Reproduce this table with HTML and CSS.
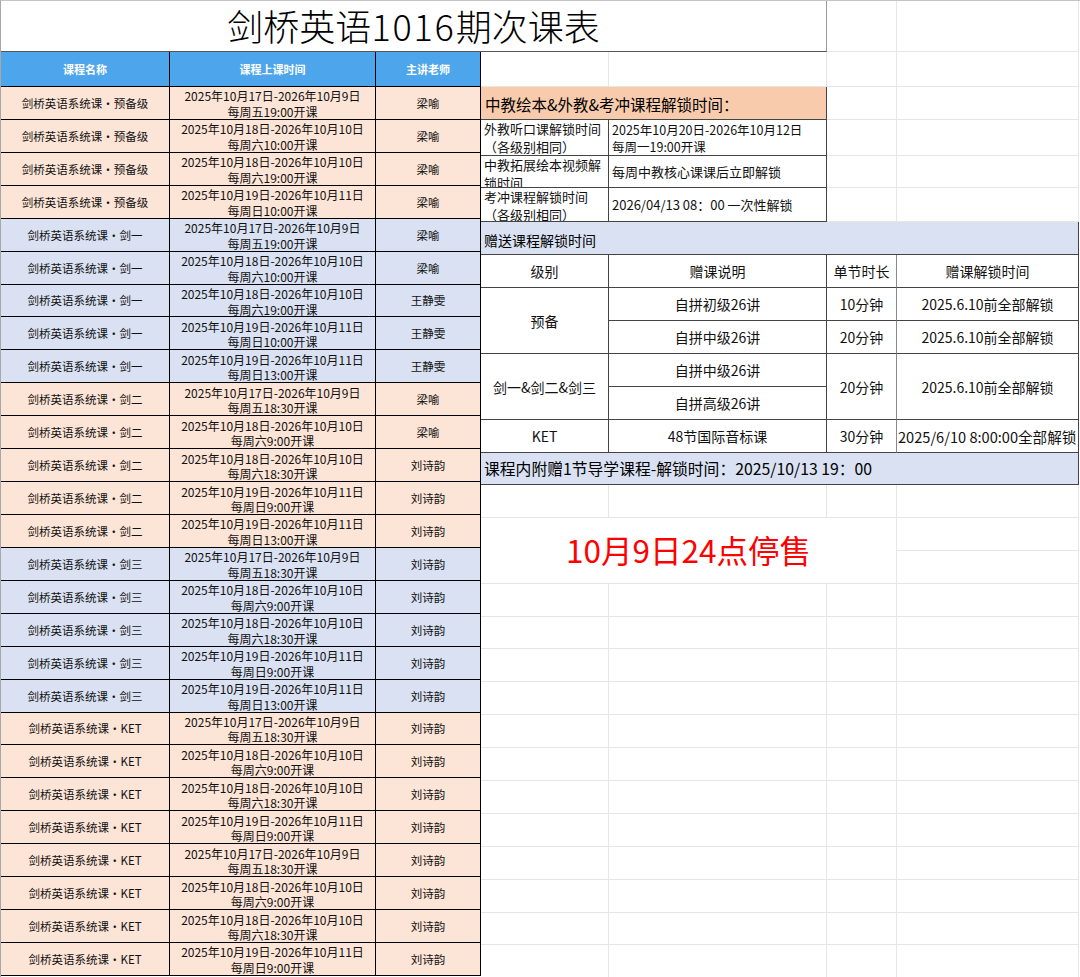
FILE: index.html
```html
<!DOCTYPE html>
<html lang="zh-CN">
<head>
<meta charset="utf-8">
<title>剑桥英语1016期次课表</title>
<link rel="stylesheet" href="styles.css">
</head>
<body>
<div class="sheet">
  <div class="top">
    <div class="title">剑桥英语<span class="num">1016</span>期次课表</div>
    <div class="e wf"></div>
    <div class="e wg"></div>
  </div>
  <div class="body">
    <div class="left">
      <div class="h">课程名称</div><div class="h">课程上课时间</div><div class="h">主讲老师</div>

      <div class="c pe">剑桥英语系统课・预备级</div><div class="c t pe">2025年10月17日-2026年10月9日<br>每周五19:00开课</div><div class="c pe">梁喻</div>
      <div class="c pe">剑桥英语系统课・预备级</div><div class="c t pe">2025年10月18日-2026年10月10日<br>每周六10:00开课</div><div class="c pe">梁喻</div>
      <div class="c pe">剑桥英语系统课・预备级</div><div class="c t pe">2025年10月18日-2026年10月10日<br>每周六19:00开课</div><div class="c pe">梁喻</div>
      <div class="c pe">剑桥英语系统课・预备级</div><div class="c t pe">2025年10月19日-2026年10月11日<br>每周日10:00开课</div><div class="c pe">梁喻</div>

      <div class="c bl">剑桥英语系统课・剑一</div><div class="c t bl">2025年10月17日-2026年10月9日<br>每周五19:00开课</div><div class="c bl">梁喻</div>
      <div class="c bl">剑桥英语系统课・剑一</div><div class="c t bl">2025年10月18日-2026年10月10日<br>每周六10:00开课</div><div class="c bl">梁喻</div>
      <div class="c bl">剑桥英语系统课・剑一</div><div class="c t bl">2025年10月18日-2026年10月10日<br>每周六19:00开课</div><div class="c bl">王静雯</div>
      <div class="c bl">剑桥英语系统课・剑一</div><div class="c t bl">2025年10月19日-2026年10月11日<br>每周日10:00开课</div><div class="c bl">王静雯</div>
      <div class="c bl">剑桥英语系统课・剑一</div><div class="c t bl">2025年10月19日-2026年10月11日<br>每周日13:00开课</div><div class="c bl">王静雯</div>

      <div class="c pe">剑桥英语系统课・剑二</div><div class="c t pe">2025年10月17日-2026年10月9日<br>每周五18:30开课</div><div class="c pe">梁喻</div>
      <div class="c pe">剑桥英语系统课・剑二</div><div class="c t pe">2025年10月18日-2026年10月10日<br>每周六9:00开课</div><div class="c pe">梁喻</div>
      <div class="c pe">剑桥英语系统课・剑二</div><div class="c t pe">2025年10月18日-2026年10月10日<br>每周六18:30开课</div><div class="c pe">刘诗韵</div>
      <div class="c pe">剑桥英语系统课・剑二</div><div class="c t pe">2025年10月19日-2026年10月11日<br>每周日9:00开课</div><div class="c pe">刘诗韵</div>
      <div class="c pe">剑桥英语系统课・剑二</div><div class="c t pe">2025年10月19日-2026年10月11日<br>每周日13:00开课</div><div class="c pe">刘诗韵</div>

      <div class="c bl">剑桥英语系统课・剑三</div><div class="c t bl">2025年10月17日-2026年10月9日<br>每周五18:30开课</div><div class="c bl">刘诗韵</div>
      <div class="c bl">剑桥英语系统课・剑三</div><div class="c t bl">2025年10月18日-2026年10月10日<br>每周六9:00开课</div><div class="c bl">刘诗韵</div>
      <div class="c bl">剑桥英语系统课・剑三</div><div class="c t bl">2025年10月18日-2026年10月10日<br>每周六18:30开课</div><div class="c bl">刘诗韵</div>
      <div class="c bl">剑桥英语系统课・剑三</div><div class="c t bl">2025年10月19日-2026年10月11日<br>每周日9:00开课</div><div class="c bl">刘诗韵</div>
      <div class="c bl">剑桥英语系统课・剑三</div><div class="c t bl">2025年10月19日-2026年10月11日<br>每周日13:00开课</div><div class="c bl">刘诗韵</div>

      <div class="c pe">剑桥英语系统课・KET</div><div class="c t pe">2025年10月17日-2026年10月9日<br>每周五18:30开课</div><div class="c pe">刘诗韵</div>
      <div class="c pe">剑桥英语系统课・KET</div><div class="c t pe">2025年10月18日-2026年10月10日<br>每周六9:00开课</div><div class="c pe">刘诗韵</div>
      <div class="c pe">剑桥英语系统课・KET</div><div class="c t pe">2025年10月18日-2026年10月10日<br>每周六18:30开课</div><div class="c pe">刘诗韵</div>
      <div class="c pe">剑桥英语系统课・KET</div><div class="c t pe">2025年10月19日-2026年10月11日<br>每周日9:00开课</div><div class="c pe">刘诗韵</div>
      <div class="c pe">剑桥英语系统课・KET</div><div class="c t pe">2025年10月17日-2026年10月9日<br>每周五18:30开课</div><div class="c pe">刘诗韵</div>
      <div class="c pe">剑桥英语系统课・KET</div><div class="c t pe">2025年10月18日-2026年10月10日<br>每周六9:00开课</div><div class="c pe">刘诗韵</div>
      <div class="c pe">剑桥英语系统课・KET</div><div class="c t pe">2025年10月18日-2026年10月10日<br>每周六18:30开课</div><div class="c pe">刘诗韵</div>
      <div class="c pe">剑桥英语系统课・KET</div><div class="c t pe">2025年10月19日-2026年10月11日<br>每周日9:00开课</div><div class="c pe">刘诗韵</div>
    </div>

    <div class="right">
      <!-- row 1 -->
      <div class="e"></div><div class="e"></div><div class="e"></div><div class="e"></div>
      <!-- row 2 -->
      <div class="k orange s2">中教绘本&amp;外教&amp;考冲课程解锁时间：</div><div class="e"></div><div class="e"></div>
      <!-- row 3 -->
      <div class="k lab">外教听口课解锁时间<br>（各级别相同）</div><div class="k val">2025年10月20日-2026年10月12日<br>每周一19:00开课</div><div class="e"></div><div class="e"></div>
      <!-- row 4 -->
      <div class="k lab">中教拓展绘本视频解锁时间</div><div class="k val mid">每周中教核心课课后立即解锁</div><div class="e"></div><div class="e"></div>
      <!-- row 5 -->
      <div class="k lab">考冲课程解锁时间<br>（各级别相同）</div><div class="k val mid">2026/04/13 08：00 一次性解锁</div><div class="e"></div><div class="e"></div>
      <!-- row 6 -->
      <div class="k band s4">赠送课程解锁时间</div>
      <!-- row 7 -->
      <div class="k g">级别</div><div class="k g">赠课说明</div><div class="k g f">单节时长</div><div class="k g">赠课解锁时间</div>
      <!-- rows 8-9 -->
      <div class="k g r2">预备</div><div class="k g">自拼初级26讲</div><div class="k g f">10分钟</div><div class="k g">2025.6.10前全部解锁</div>
      <div class="k g">自拼中级26讲</div><div class="k g f">20分钟</div><div class="k g">2025.6.10前全部解锁</div>
      <!-- rows 10-11 -->
      <div class="k g r2">剑一&amp;剑二&amp;剑三</div><div class="k g">自拼中级26讲</div><div class="k g f r2">20分钟</div><div class="k g r2">2025.6.10前全部解锁</div>
      <div class="k g">自拼高级26讲</div>
      <!-- row 12 -->
      <div class="k g">KET</div><div class="k g">48节国际音标课</div><div class="k g f">30分钟</div><div class="k g tight">2025/6/10 8:00:00全部解锁</div>
      <!-- row 13 -->
      <div class="k band big s4">课程内附赠1节导学课程-解锁时间：2025/10/13 19：00</div>
      <!-- row 14 -->
      <div class="e"></div><div class="e"></div><div class="e"></div><div class="e"></div>
      <!-- rows 15-16 -->
      <div class="e stop s3 r2">10月9日24点停售</div><div class="e"></div>
      <div class="e"></div>
      <!-- rows 17-28 -->
      <div class="e"></div><div class="e"></div><div class="e"></div><div class="e"></div>
      <div class="e"></div><div class="e"></div><div class="e"></div><div class="e"></div>
      <div class="e"></div><div class="e"></div><div class="e"></div><div class="e"></div>
      <div class="e"></div><div class="e"></div><div class="e"></div><div class="e"></div>
      <div class="e"></div><div class="e"></div><div class="e"></div><div class="e"></div>
      <div class="e"></div><div class="e"></div><div class="e"></div><div class="e"></div>
      <div class="e"></div><div class="e"></div><div class="e"></div><div class="e"></div>
      <div class="e"></div><div class="e"></div><div class="e"></div><div class="e"></div>
      <div class="e"></div><div class="e"></div><div class="e"></div><div class="e"></div>
      <div class="e"></div><div class="e"></div><div class="e"></div><div class="e"></div>
      <div class="e"></div><div class="e"></div><div class="e"></div><div class="e"></div>
      <div class="e"></div><div class="e"></div><div class="e"></div><div class="e"></div>
    </div>
  </div>
</div>
</body>
</html>
```

FILE: styles.css
```css
* {
  box-sizing: border-box;
  margin: 0;
  padding: 0;
}

html, body {
  background: #ffffff;
}

body {
  margin: 0;
  font-family: "Noto Sans CJK SC", "Microsoft YaHei", sans-serif;
  color: #000;
}

.sheet {
  width: 1080px;
  height: 977px;
  overflow: hidden;
  border-top: 1px solid #c4c4c4;
  border-left: 1px solid #a8a8a8;
}

.top {
  display: flex;
  height: 51px;
}

.title {
  width: 826px;
  height: 51px;
  border-right: 1px solid #9a9a9a;
  border-bottom: 1px solid #555;
  display: flex;
  align-items: center;
  justify-content: center;
  font-size: 36px;
  font-weight: 300;
  line-height: 1;
  padding-bottom: 2px;
}

.title .num {
  letter-spacing: 0.05em;
}

.wf { width: 70px; }
.wg { width: 182px; }

.body {
  display: flex;
}

/* left schedule table */
.left {
  display: grid;
  grid-template-columns: 169px 206px 105px;
  grid-template-rows: 35px repeat(27, 32.93px);
}

.h {
  background: #4da6eb;
  color: #fff;
  font-weight: bold;
  font-size: 11px;
  border-right: 1px solid #000;
  border-bottom: 1px solid #000;
  display: flex;
  align-items: center;
  justify-content: center;
}

.c {
  border-right: 1px solid #000;
  border-bottom: 1px solid #000;
  display: flex;
  align-items: center;
  justify-content: center;
  text-align: center;
  font-size: 11.5px;
  color: #111;
  overflow: hidden;
  white-space: nowrap;
}

.c.t {
  font-size: 12px;
  line-height: 15.5px;
  padding-top: 2px;
}

.pe { background: #fce4d6; }
.bl { background: #d9e1f2; }

/* right side grid */
.right {
  display: grid;
  grid-template-columns: 128px 218px 70px 182px;
  grid-template-rows: 35px 33px 36px 32px 34px 33px 33px 33px 33px 33px 33px 33px 32px repeat(15, 32.9px);
}

.e {
  border-right: 1px solid #e6e6e6;
  border-bottom: 1px solid #e6e6e6;
}

.k {
  border-right: 1px solid #444;
  border-bottom: 1px solid #444;
  overflow: hidden;
}

.s2 { grid-column: span 2; }
.s3 { grid-column: span 3; }
.s4 { grid-column: span 4; }
.r2 { grid-row: span 2; }

.orange {
  background: #f8cbad;
  font-size: 15.5px;
  display: flex;
  align-items: center;
  padding-left: 4px;
  padding-top: 2px;
}

.lab {
  font-size: 13px;
  line-height: 17.5px;
  padding-left: 3px;
  padding-top: 0;
  color: #111;
}

.val {
  font-size: 12.5px;
  line-height: 17px;
  padding-left: 3px;
  padding-top: 1px;
  color: #111;
}

.val.mid {
  font-size: 13px;
  display: flex;
  align-items: center;
  padding-top: 0;
}

.band {
  background: #d9e1f2;
  font-size: 14px;
  display: flex;
  align-items: flex-end;
  padding-left: 3px;
  padding-bottom: 4px;
  line-height: 20px;
}

.band.big {
  font-size: 15.8px;
  align-items: center;
  padding-bottom: 0;
  padding-top: 1px;
}

.g {
  font-size: 14px;
  display: flex;
  align-items: center;
  justify-content: center;
  white-space: nowrap;
  color: #111;
}

.g.f {
  border-right-color: #8a8a8a;
}

.g.tight {
  font-size: 14.6px;
  justify-content: flex-start;
  padding-left: 1px;
}

.stop {
  display: flex;
  align-items: center;
  justify-content: center;
  color: #ff0000;
  font-size: 31.5px;
  padding-bottom: 2px;
}
```
